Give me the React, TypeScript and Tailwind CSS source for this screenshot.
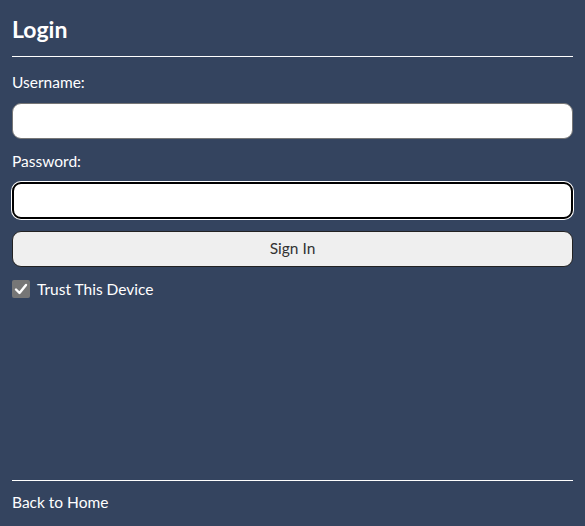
import React from "react";

export default function App() {
  return (
    <div
      className="flex h-[526px] w-[585px] flex-col bg-[#34445f] px-3 text-white"
      style={{ fontFamily: "Lato, 'Noto Sans', sans-serif" }}
    >
      <h1 className="pt-[14px] text-[23px] font-bold leading-[30px]">Login</h1>
      <div className="mt-[12px] h-px w-full bg-white" />
      <label className="mt-[15px] block text-[15.5px] leading-[20px]">Username:</label>
      <input
        type="text"
        className="mt-[11px] h-[36px] w-full rounded-[9px] border border-[#767676] bg-white px-2 text-black outline-none"
      />
      <label className="mt-[12px] block text-[15.5px] leading-[20px]">Password:</label>
      <input
        type="password"
        className="mt-[11px] h-[37px] w-full rounded-[9px] border-2 border-black bg-white px-2 text-black shadow-[0_0_0_1px_#ffffff] outline-none"
      />
      <button className="mt-[12px] h-[36px] w-full rounded-[9px] border border-[#222] bg-[#efefef] text-[15.5px] text-[#333]">
        Sign In
      </button>
      <div className="mt-[12px] flex items-center gap-[7px]">
        <span className="flex h-[18px] w-[18px] items-center justify-center rounded-[2px] bg-[#767676]">
          <svg width="14" height="14" viewBox="0 0 14 14">
            <path d="M2 7.5 L5.5 11 L12 3" fill="none" stroke="white" strokeWidth="2.4" strokeLinecap="round" strokeLinejoin="round" />
          </svg>
        </span>
        <span className="text-[15.5px] leading-[20px]">Trust This Device</span>
      </div>
      <div className="flex-1" />
      <div className="h-px w-full bg-white" />
      <a className="mb-[14px] mt-[11px] block text-[15.5px] leading-[20px] text-white">Back to Home</a>
    </div>
  );
}
